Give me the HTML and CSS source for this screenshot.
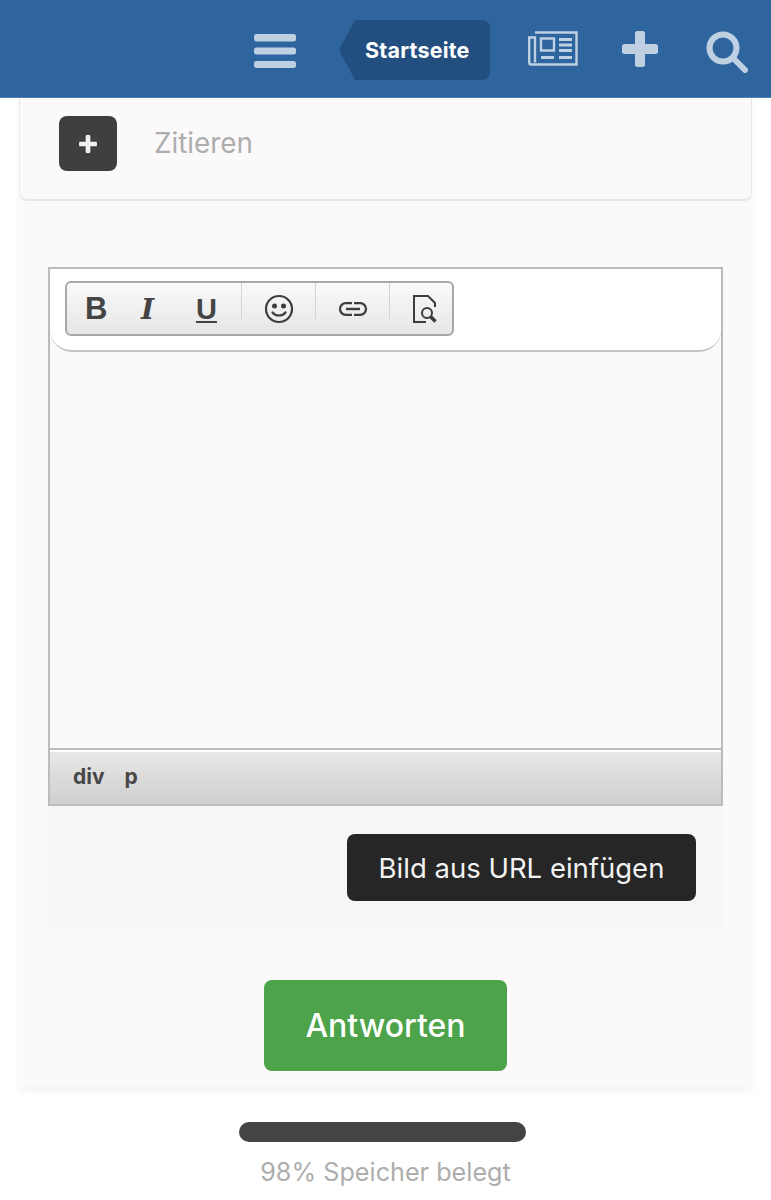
FILE: index.html
```html
<!DOCTYPE html>
<html lang="de">
<head>
<meta charset="utf-8">
<title>Antworten</title>
<link rel="stylesheet" href="styles.css">
</head>
<body>
<header class="topbar">
  <svg class="ic-menu" viewBox="0 0 42 34" width="42" height="34"><rect y="0" width="42" height="7.500" rx="2.500"/><rect y="13.500" width="42" height="7" rx="2.500"/><rect y="27" width="42" height="7" rx="2.500"/></svg>
  <a class="crumb">Startseite</a>
  <svg class="ic-news" viewBox="0 0 50 36" width="50" height="36" fill="none" stroke="#bfd0e2" stroke-width="2.400"><path d="M7 1.500h41.500v32H3.500a2.300 2.300 0 0 1-2.300-2.300V6.500h5.800v25"/><path d="M13 7.500h13v12H13z"/><path d="M31 8.500h13M31 14h13M31 19.500h13M13 26.500h13M31 26.500h13" stroke-width="2.800"/></svg>
  <svg class="ic-plus" viewBox="0 0 36 36" width="36" height="36"><path d="M13 2.500A2.500 2.500 0 0 1 15.500 0h5A2.500 2.500 0 0 1 23 2.500V13h10.500a2.500 2.500 0 0 1 2.500 2.500v5a2.500 2.500 0 0 1-2.500 2.500H23v10.500a2.500 2.500 0 0 1-2.500 2.500h-5a2.500 2.500 0 0 1-2.500-2.500V23H2.500A2.500 2.500 0 0 1 0 20.500v-5A2.500 2.500 0 0 1 2.500 13H13z"/></svg>
  <svg class="ic-search" viewBox="0 0 42 42" width="42" height="42" fill="none" stroke="#bfd0e2"><circle cx="17" cy="17" r="13.500" stroke-width="6"/><path d="M27 27l12 12" stroke-width="6" stroke-linecap="round"/></svg>
</header>

<main class="card">
  <section class="quote">
    <span class="quote-btn"><svg viewBox="0 0 20 20" width="22" height="22"><path d="M7.500 1.500a1 1 0 0 1 1-1h3a1 1 0 0 1 1 1v6h6a1 1 0 0 1 1 1v3a1 1 0 0 1-1 1h-6v6a1 1 0 0 1-1 1h-3a1 1 0 0 1-1-1v-6h-6a1 1 0 0 1-1-1v-3a1 1 0 0 1 1-1h6z" transform="translate(1.500 1.500) scale(.85)"/></svg></span>
    <span class="quote-label">Zitieren</span>
  </section>

  <section class="editor-wrap">
    <div class="editor">
      <div class="toolhead">
        <div class="toolbar">
          <div class="group group-text">
            <b class="t-b">B</b>
            <i class="t-i">I</i>
            <u class="t-u">U</u>
          </div>
          <div class="group">
            <svg viewBox="0 0 30 30" width="30" height="30" fill="none" stroke="#3d3d3d" stroke-width="2.200"><circle cx="15" cy="15" r="13"/><circle cx="10.500" cy="12" r="2.500" fill="#3d3d3d" stroke="none"/><circle cx="19.500" cy="12" r="2.500" fill="#3d3d3d" stroke="none"/><path d="M8.500 18.500c3 4 10 4 13 0" stroke-linecap="round"/></svg>
          </div>
          <div class="group">
            <svg viewBox="0 0 30 16" width="30" height="16" fill="none" stroke="#3d3d3d" stroke-width="2.200"><path d="M14 2.200H7.800a5.800 5.800 0 0 0 0 11.600H14"/><path d="M16 2.200h6.200a5.800 5.800 0 0 1 0 11.600H16"/><path d="M8 8h14" stroke-width="2.400"/></svg>
          </div>
          <div class="group group-last">
            <svg viewBox="0 0 26 28" width="26" height="28" fill="none" stroke="#3d3d3d" stroke-width="2"><path d="M23 12V8l-7-7H2v26h12"/><circle cx="15" cy="18" r="5"/><path d="M18.500 21.500l5 5" stroke-width="3.500"/></svg>
          </div>
        </div>
      </div>
      <div class="editor-body"></div>
      <div class="statusbar"><span>div</span><span>p</span></div>
    </div>
    <div class="url-row"><button class="url-btn">Bild aus URL einfügen</button></div>
  </section>

  <div class="submit-row"><button class="submit">Antworten</button></div>
</main>

<footer class="storage">
  <div class="bar"></div>
  <p class="bar-label">98% Speicher belegt</p>
</footer>
</body>
</html>
```
FILE: styles.css
```css
* { box-sizing: border-box; }
html, body { margin: 0; padding: 0; }
body {
  background: #fff;
  font-family: Inter, "Liberation Sans", sans-serif;
  height: 1200px;
  overflow: hidden;
}
.topbar {
  height: 98px;
  background: #2e659f;
  border-bottom: 1px solid #4a83bd;
  display: flex;
  align-items: center;
  padding-left: 254px;
}
.ic-menu { fill: #bfd0e2; margin-right: 43px; margin-top: 5px; flex: none; }
.crumb {
  display: flex;
  align-items: center;
  flex: none;
  width: 151px;
  height: 60px;
  margin-top: 3px;
  padding-left: 26px;
  background: #234f80;
  color: #fff;
  font-size: 21.500px;
  letter-spacing: .2px;
  font-weight: 700;
  border-radius: 8px;
  clip-path: polygon(16px 0, 100% 0, 100% 100%, 16px 100%, 0 50%);
}
.ic-news { margin-left: 38px; margin-top: 1px; flex: none; }
.ic-plus { fill: #bfd0e2; margin-left: 44px; margin-top: 1px; flex: none; }
.ic-search { margin-left: 48px; margin-top: 7px; flex: none; }

.card {
  margin: 0 19px;
  background: #fbf9fa;
  height: 989px;
  box-shadow: 0 4px 8px rgba(0,0,0,.05);
  display: flex;
  flex-direction: column;
}
.quote {
  height: 103px;
  border: 1px solid #e9e8e9;
  border-top: 0;
  border-bottom-width: 2px;
  border-radius: 0 0 8px 8px;
  display: flex;
  align-items: flex-start;
  padding: 18px 0 0 39px;
}
.quote-btn {
  width: 58px;
  height: 55px;
  background: #3f3f3f;
  border-radius: 8px;
  display: flex;
  align-items: center;
  justify-content: center;
  fill: #f2f2f2;
}
.quote-label {
  margin-left: 37px;
  font-size: 27.800px;
  line-height: 55px;
  color: #adadad;
}
.editor-wrap { margin: 66px 29px 0; }
.editor {
  border: 2px solid #bcbcbc;
  height: 539px;
  display: flex;
  flex-direction: column;
}
.toolhead {
  height: 83px;
  background: #fff;
  border-bottom: 2px solid #c4c4c4;
  border-radius: 0 0 22px 22px;
  padding: 12px 0 0 15px;
  flex: none;
}
.toolbar {
  width: 389px;
  height: 55px;
  border: 2px solid #a8a8a8;
  border-radius: 6px;
  background: linear-gradient(#fafafa, #e6e6e6);
  display: flex;
  color: #444;
}
.group {
  flex: none;
  width: 74px;
  height: 36px;
  border-right: 1px solid #d4d4d4;
  display: flex;
  align-items: center;
  justify-content: center;
  padding-top: 16px;
}
.group svg { flex: none; }
.group-text {
  width: 175px;
  justify-content: flex-start;
  padding-left: 18px;
  font-family: "Liberation Sans", sans-serif;
  font-size: 31px;
  font-weight: 700;
}
.group-last { border-right: 0; width: 63px; padding-left: 6px; }
.t-b { width: 56px; }
.t-i { width: 55px; font-family: "DejaVu Serif", serif; font-size: 28px; font-weight: 700; }
.t-u { font-size: 29px; }
.editor-body { flex: 1; background: #fbf9fa; }
.statusbar {
  height: 56px;
  flex: none;
  border-top: 2px solid #bcbcbc;
  box-shadow: inset 0 2px 0 #fff;
  background: linear-gradient(#e8e8e8, #cfcfcf);
  display: flex;
  gap: 20px;
  padding: 14px 0 0 23px;
  font-size: 21px;
  font-weight: 700;
  color: #484848;
}
.url-row {
  height: 123px;
  background: #f6f6f6;
  display: flex;
  justify-content: flex-end;
  padding: 28px 27px 0 0;
}
.url-btn {
  width: 349px;
  height: 67px;
  border: 0;
  border-radius: 8px;
  background: #262626;
  color: #f2f2f2;
  font: 400 27.500px Inter, "Liberation Sans", sans-serif;
}
.submit-row { display: flex; justify-content: center; margin-top: 51px; }
.submit {
  width: 243px;
  height: 91px;
  border: 0;
  border-radius: 8px;
  background: #4ca34a;
  color: #fff;
  font: 500 32px Inter, "Liberation Sans", sans-serif;
}
.storage {
  display: flex;
  flex-direction: column;
  align-items: center;
  padding-top: 35px;
}
.bar {
  width: 287px;
  height: 20px;
  margin-right: 6px;
  background: #444;
  border-radius: 10px;
}
.bar-label {
  margin: 15px 0 0;
  font-size: 25.200px;
  line-height: 30px;
  color: #adadad;
}
```
